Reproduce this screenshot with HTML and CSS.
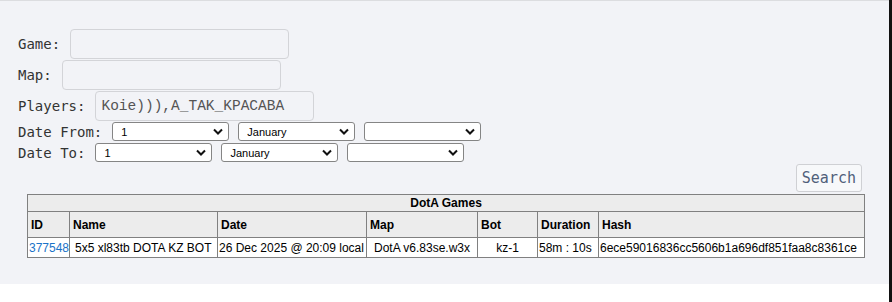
FILE: index.html
```
<!DOCTYPE html>
<html lang="en">
<head>
  <meta charset="UTF-8">
  <title>DotA Games</title>
  <link rel="stylesheet" href="styles.css">
</head>
<body>
  <div class="page">
    <div class="panel">
      <form class="search-form">
        <div class="row">
          <label>Game:</label>
          <input type="text" class="field">
        </div>
        <div class="row">
          <label>Map:</label>
          <input type="text" class="field">
        </div>
        <div class="row">
          <label>Players:</label>
          <input type="text" class="field" value="Koie))),A_TAK_KPACABA">
        </div>
        <div class="row date-row">
          <label>Date From:</label>
          <span class="sel"><select><option>1</option></select><svg viewBox="0 0 10 6"><path d="M1 1l4 4 4-4"/></svg></span>
          <span class="sel"><select><option>January</option></select><svg viewBox="0 0 10 6"><path d="M1 1l4 4 4-4"/></svg></span>
          <span class="sel"><select><option></option></select><svg viewBox="0 0 10 6"><path d="M1 1l4 4 4-4"/></svg></span>
        </div>
        <div class="row date-row">
          <label>Date To:</label>
          <span class="sel"><select><option>1</option></select><svg viewBox="0 0 10 6"><path d="M1 1l4 4 4-4"/></svg></span>
          <span class="sel"><select><option>January</option></select><svg viewBox="0 0 10 6"><path d="M1 1l4 4 4-4"/></svg></span>
          <span class="sel"><select><option></option></select><svg viewBox="0 0 10 6"><path d="M1 1l4 4 4-4"/></svg></span>
        </div>
        <div class="actions">
          <button type="button" class="search-btn">Search</button>
        </div>
      </form>

      <table class="games">
        <colgroup>
          <col style="width:42px">
          <col style="width:148px">
          <col style="width:149px">
          <col style="width:111px">
          <col style="width:60px">
          <col style="width:61px">
          <col style="width:266px">
        </colgroup>
        <tr>
          <th colspan="7" class="caption">DotA Games</th>
        </tr>
        <tr class="heads">
          <th>ID</th>
          <th>Name</th>
          <th>Date</th>
          <th>Map</th>
          <th>Bot</th>
          <th>Duration</th>
          <th>Hash</th>
        </tr>
        <tr>
          <td><a href="#">377548</a></td>
          <td class="name">5x5 xl83tb DOTA KZ BOT</td>
          <td>26 Dec 2025 @ 20:09 local</td>
          <td class="center">DotA v6.83se.w3x</td>
          <td class="center">kz-1</td>
          <td>58m : 10s</td>
          <td>6ece59016836cc5606b1a696df851faa8c8361ce</td>
        </tr>
      </table>
    </div>
  </div>
</body>
</html>
```

FILE: styles.css
```
body {
  margin: 0;
  background: #fff;
}
.page {
  height: 302px;
  border-right: 3px solid #111;
}
.panel {
  background: #f2f3f7;
  border-top: 1px solid #dcdde0;
  height: 284px;
  box-sizing: border-box;
  padding-top: 28px;
}
.search-form {
  padding-left: 18px;
  font-family: "DejaVu Sans Mono", monospace;
  font-size: 14px;
  color: #333;
}
.row {
  display: flex;
  align-items: center;
  gap: 10px;
  margin-bottom: 1px;
}
.field {
  width: 219px;
  height: 30px;
  box-sizing: border-box;
  border: 1px solid #d3d4d8;
  border-radius: 4px;
  background: #f2f3f7;
  padding: 0 5px;
  font-family: "Liberation Mono", "DejaVu Sans Mono", monospace;
  font-size: 14.5px;
  color: #555;
}
.date-row {
  gap: 9px;
  margin-top: 1px;
  margin-bottom: 2px;
}
.date-row label {
  margin-right: 1px;
}
.sel {
  position: relative;
  display: block;
  width: 117px;
  height: 19px;
}
.sel select {
  appearance: none;
  -webkit-appearance: none;
  width: 100%;
  height: 100%;
  box-sizing: border-box;
  padding: 0 0 0 8px;
  font-family: "Liberation Sans", Arial, sans-serif;
  font-size: 11px;
  color: #000;
  background: #fff;
  border: 1px solid #858585;
  border-radius: 3px;
}
.sel svg {
  position: absolute;
  right: 6px;
  top: 6px;
  width: 10px;
  height: 7px;
  fill: none;
  stroke: #111;
  stroke-width: 2;
}
.actions {
  text-align: right;
  padding-right: 27px;
  margin-top: 1px;
}
.search-btn {
  height: 28px;
  padding: 0 5px;
  font-family: "DejaVu Sans Mono", monospace;
  font-size: 15px;
  color: #50607a;
  background: #f7f8fa;
  border: 1px solid #cfd0d4;
  border-radius: 3px;
}
.games {
  margin-top: 2px;
  margin-left: 27px;
  width: 837px;
  table-layout: fixed;
  border-collapse: collapse;
  font-family: "Liberation Sans", Arial, sans-serif;
  font-size: 12px;
  color: #000;
}
.games th,
.games td {
  border: 1px solid #808080;
  padding: 2px 3px;
  white-space: nowrap;
  overflow: hidden;
  text-align: left;
}
.games th {
  background: #ececec;
}
.games .caption {
  text-align: center;
  height: 12px;
  padding: 1px 3px;
}
.games .heads th {
  height: 23px;
  padding: 1px 3px;
}
.games td {
  background: #fff;
  height: 17px;
  padding: 1px 1px;
}
.games td.name {
  padding-left: 5px;
}
.games td.center {
  text-align: center;
}
.games a {
  color: #1a73c8;
  text-decoration: none;
}
```
